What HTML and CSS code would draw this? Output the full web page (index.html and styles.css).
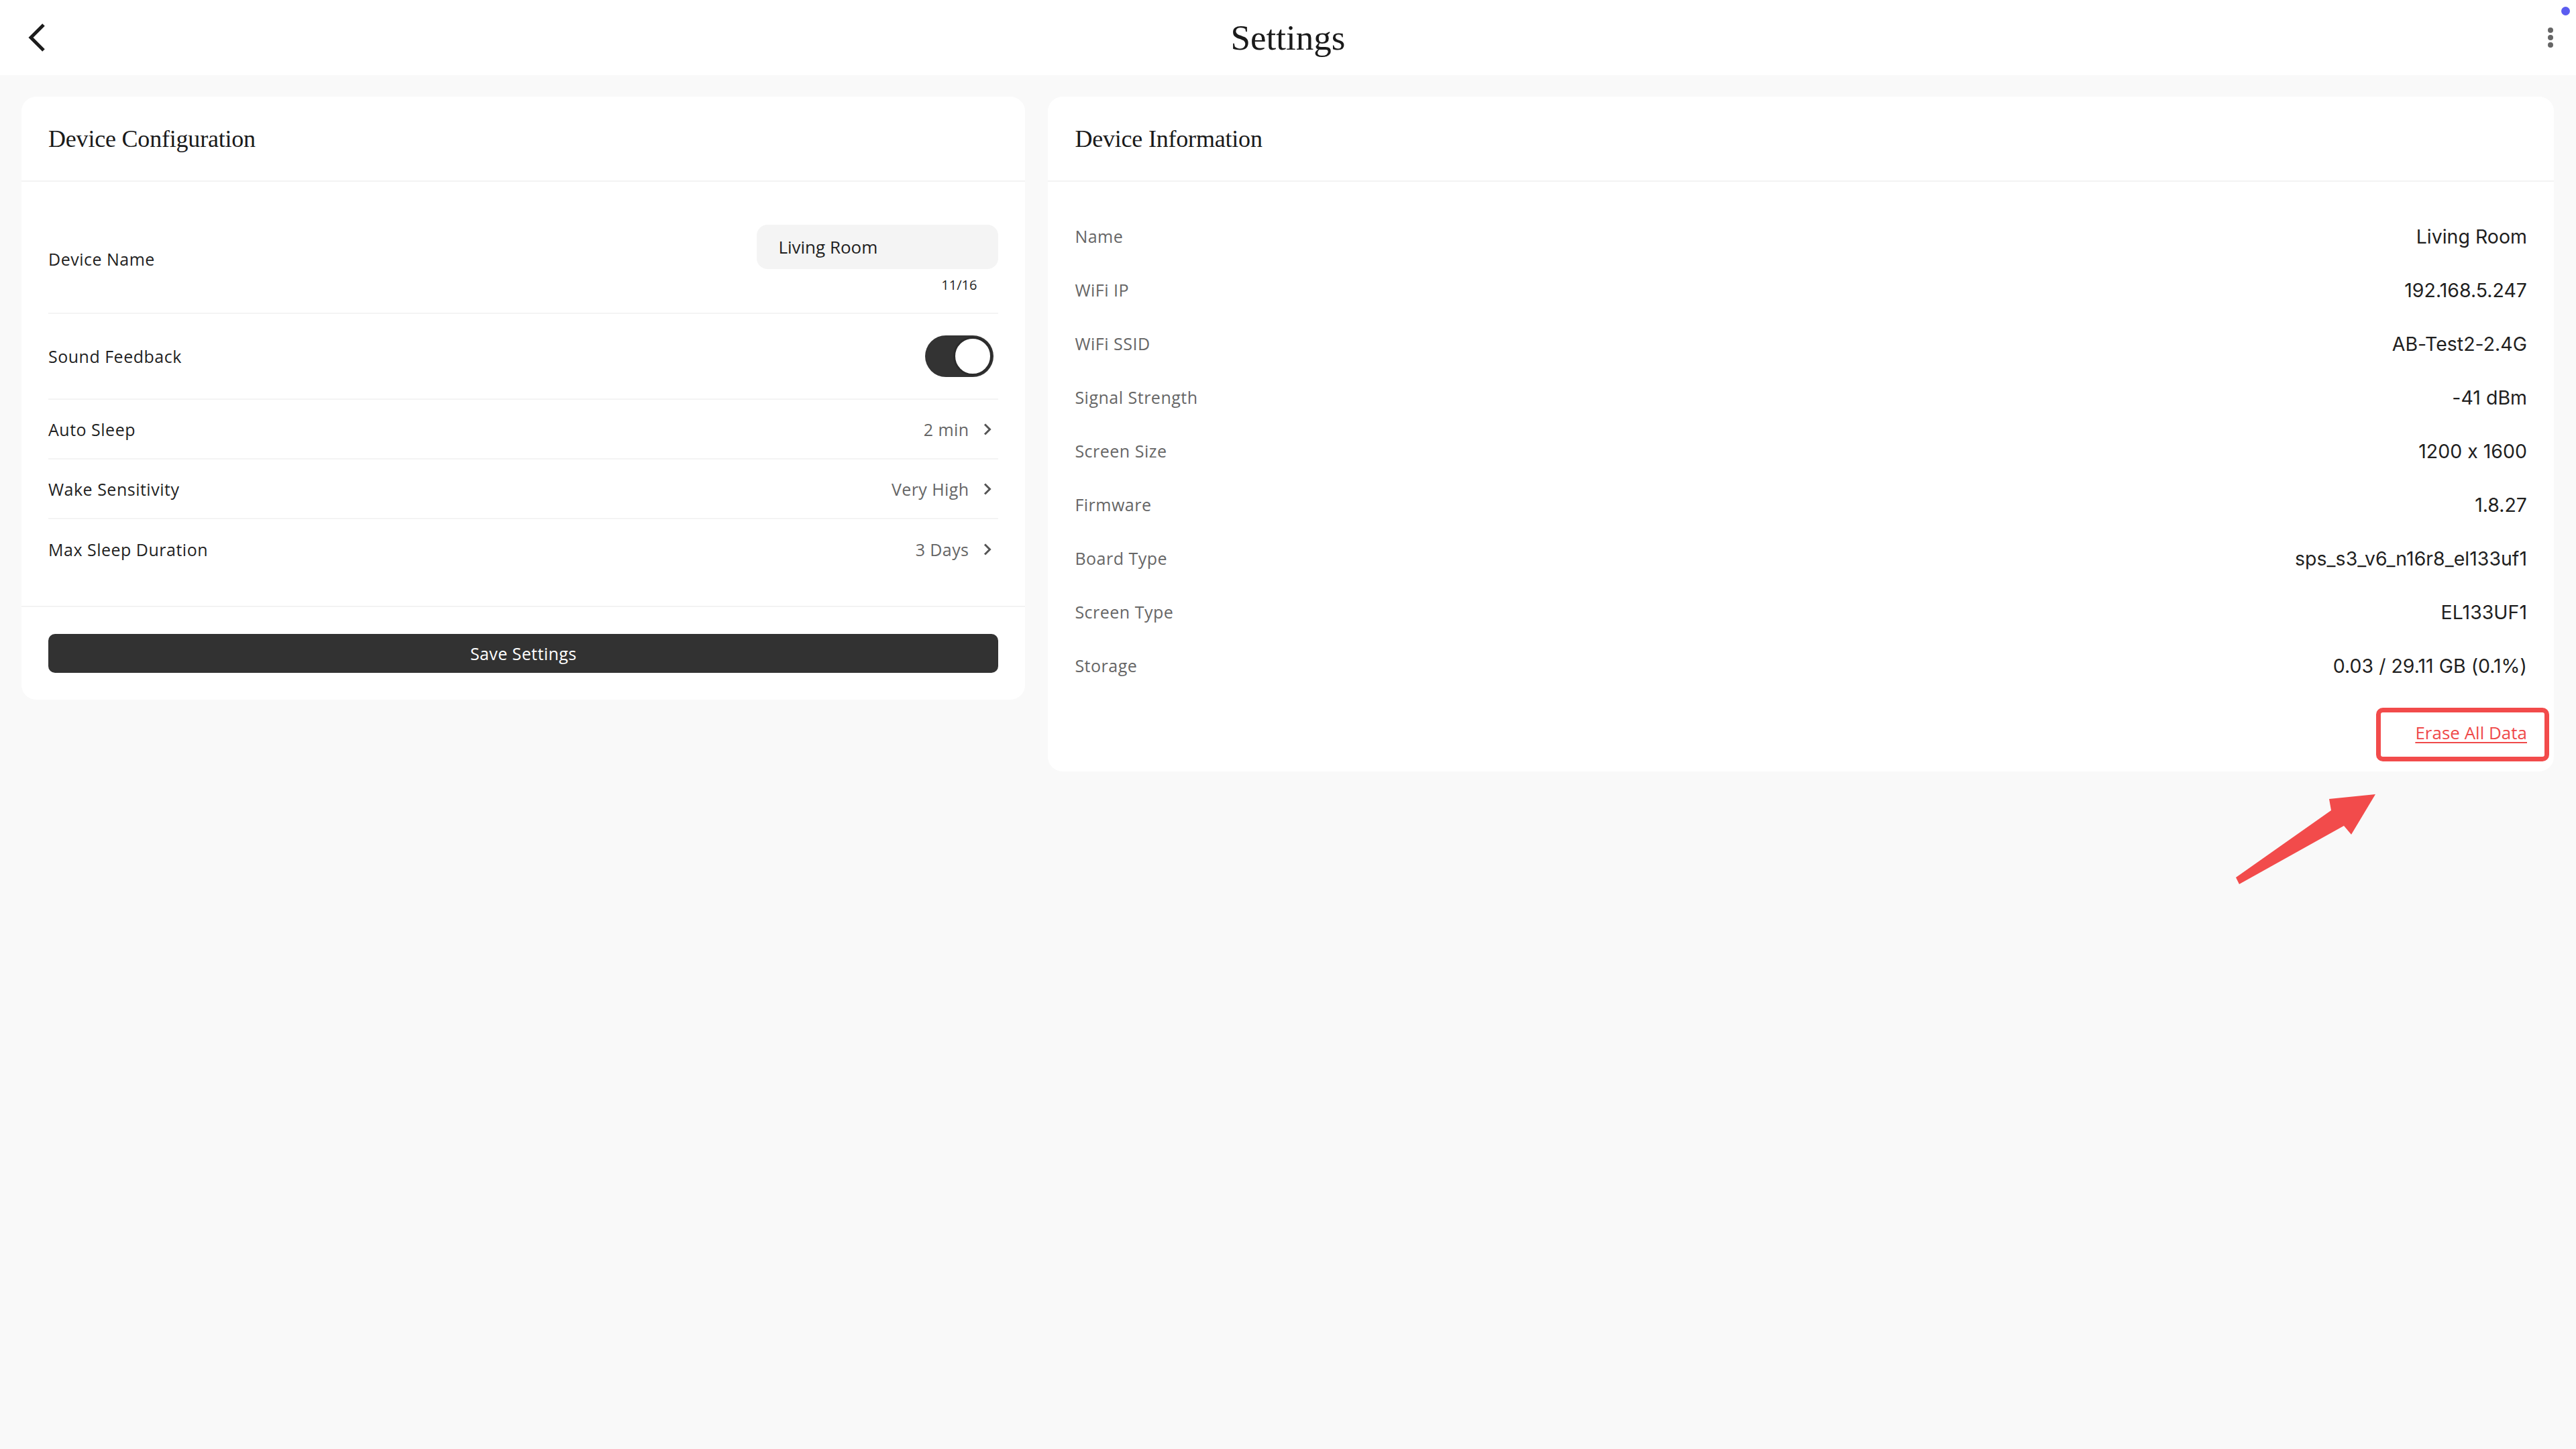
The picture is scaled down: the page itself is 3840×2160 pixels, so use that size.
FILE: index.html
```html
<!DOCTYPE html>
<html lang="en">
<head>
    <meta charset="UTF-8">
    <meta name="viewport" content="width=device-width, initial-scale=1.0">
    <title>Settings</title>
    <link rel="stylesheet" href="styles.css">
</head>
<body>
    <header class="topbar">
        <button class="icon-btn back-btn" aria-label="Back">
            <svg viewBox="0 0 28 44" width="28" height="44"><path d="M24 3 L5 22 L24 41" fill="none" stroke="#1c1c1c" stroke-width="5"/></svg>
        </button>
        <h1 class="page-title">Settings</h1>
        <button class="icon-btn menu-btn" aria-label="More options">
            <span class="dot"></span>
            <span class="dot"></span>
            <span class="dot"></span>
        </button>
        <span class="status-dot"></span>
    </header>

    <main class="content">
        <section class="card">
            <div class="card-header">
                <h2>Device Configuration</h2>
            </div>
            <div class="card-body config-body">
                <div class="setting-row name-row">
                    <label for="deviceName">Device Name</label>
                    <div class="name-field">
                        <input type="text" id="deviceName" value="Living Room" maxlength="16">
                        <span class="char-count">11/16</span>
                    </div>
                </div>
                <div class="setting-row toggle-row">
                    <span class="setting-label">Sound Feedback</span>
                    <button class="toggle is-on" aria-label="Sound Feedback"><span class="knob"></span></button>
                </div>
                <div class="setting-row link-row">
                    <span class="setting-label">Auto Sleep</span>
                    <span class="setting-value">2 min
                        <svg viewBox="0 0 24 24" width="24" height="24"><path d="M4 4.5 L11.5 12 L4 19.5" fill="none" stroke="#555" stroke-width="3"/></svg>
                    </span>
                </div>
                <div class="setting-row link-row">
                    <span class="setting-label">Wake Sensitivity</span>
                    <span class="setting-value">Very High
                        <svg viewBox="0 0 24 24" width="24" height="24"><path d="M4 4.5 L11.5 12 L4 19.5" fill="none" stroke="#555" stroke-width="3"/></svg>
                    </span>
                </div>
                <div class="setting-row link-row">
                    <span class="setting-label">Max Sleep Duration</span>
                    <span class="setting-value">3 Days
                        <svg viewBox="0 0 24 24" width="24" height="24"><path d="M4 4.5 L11.5 12 L4 19.5" fill="none" stroke="#555" stroke-width="3"/></svg>
                    </span>
                </div>
            </div>
            <div class="card-footer">
                <button class="save-btn">Save Settings</button>
            </div>
        </section>

        <section class="card">
            <div class="card-header">
                <h2>Device Information</h2>
            </div>
            <div class="card-body info-body">
                <div class="info-row"><span class="info-label">Name</span><span class="info-value">Living Room</span></div>
                <div class="info-row"><span class="info-label">WiFi IP</span><span class="info-value">192.168.5.247</span></div>
                <div class="info-row"><span class="info-label">WiFi SSID</span><span class="info-value">AB-Test2-2.4G</span></div>
                <div class="info-row"><span class="info-label">Signal Strength</span><span class="info-value">-41 dBm</span></div>
                <div class="info-row"><span class="info-label">Screen Size</span><span class="info-value">1200 x 1600</span></div>
                <div class="info-row"><span class="info-label">Firmware</span><span class="info-value">1.8.27</span></div>
                <div class="info-row"><span class="info-label">Board Type</span><span class="info-value">sps_s3_v6_n16r8_el133uf1</span></div>
                <div class="info-row"><span class="info-label">Screen Type</span><span class="info-value">EL133UF1</span></div>
                <div class="info-row"><span class="info-label">Storage</span><span class="info-value">0.03 / 29.11 GB (0.1%)</span></div>

                <div class="erase-row">
                    <a href="#" class="erase-link">Erase All Data</a>
                    <!-- annotation overlay -->
                    <span class="highlight-box"></span>
                    <svg class="callout-arrow" viewBox="0 0 225 150" width="225" height="150">
                        <polygon points="7,132 149,32 146,15 215,8 179,68 168,55 12,142" fill="#f24b4b"/>
                    </svg>
                </div>
            </div>
        </section>
    </main>
</body>
</html>
```

FILE: styles.css
```css
* {
    box-sizing: border-box;
}
body {
    margin: 0;
    min-height: 100vh;
    background-color: #f9f9f9;
    font-family: 'Open Sans', 'Noto Sans', sans-serif;
    color: #1f1f1f;
}
button {
    font-family: inherit;
}
.topbar {
    height: 112px;
    background-color: #ffffff;
    display: flex;
    align-items: center;
    justify-content: space-between;
    padding: 0 30px 0 41px;
    position: relative;
}
.icon-btn {
    background: none;
    border: none;
    padding: 0;
    cursor: pointer;
    display: flex;
}
.page-title {
    position: absolute;
    left: 50%;
    transform: translateX(-50%);
    margin: 0;
    font-family: 'Liberation Serif', serif;
    font-weight: normal;
    font-size: 53px;
    color: #1a1a1a;
}
.menu-btn {
    flex-direction: column;
    gap: 3px;
    padding: 4px;
}
.dot {
    width: 8px;
    height: 8px;
    border-radius: 50%;
    background-color: #666;
}
.status-dot {
    position: absolute;
    top: 10px;
    right: 9px;
    width: 13px;
    height: 13px;
    border-radius: 50%;
    background-color: #5b5cf0;
}
.content {
    display: grid;
    grid-template-columns: 2fr 3fr;
    gap: 34px;
    align-items: start;
    padding: 32px 33px 32px 32px;
}
.card {
    background-color: #ffffff;
    border-radius: 22px;
}
.card-header {
    height: 127px;
    display: flex;
    align-items: center;
    padding: 0 40px;
    border-bottom: 2px solid #f3f3f3;
}
.card-header h2 {
    margin: 0;
    font-family: 'Liberation Serif', serif;
    font-weight: normal;
    font-size: 36px;
    color: #1a1a1a;
    letter-spacing: -0.2px;
}
.config-body {
    padding: 31px 40px 40px;
}
.setting-row {
    display: flex;
    align-items: center;
    justify-content: space-between;
    border-bottom: 2px solid #f4f4f4;
}
.setting-row:last-child {
    border-bottom: none;
}
.setting-row label,
.setting-label {
    font-size: 25px;
    letter-spacing: 0.5px;
    color: #1f1f1f;
}
.name-row {
    padding: 33px 0 29px;
}
.name-field {
    width: 360px;
    display: flex;
    flex-direction: column;
}
.name-field input {
    height: 66px;
    border: none;
    border-radius: 16px;
    background-color: #f4f4f4;
    padding: 0 32px;
    font-family: inherit;
    font-size: 26px;
    color: #1f1f1f;
    outline: none;
}
.char-count {
    align-self: flex-end;
    margin-top: 12px;
    padding-right: 32px;
    font-size: 20px;
    line-height: 24px;
    color: #1f1f1f;
}
.toggle-row {
    padding: 32px 0;
}
.toggle {
    width: 102px;
    height: 62px;
    margin-right: 7px;
    border: none;
    border-radius: 31px;
    background-color: #333333;
    padding: 2px;
    display: flex;
    justify-content: flex-end;
}
.knob {
    width: 58px;
    height: 58px;
    border-radius: 50%;
    background-color: #ffffff;
    border: 3px solid #2b2b2b;
}
.link-row {
    height: 89px;
}
.setting-value {
    display: flex;
    align-items: center;
    gap: 20px;
    font-size: 25px;
    letter-spacing: 0.4px;
    color: #666666;
}
.card-footer {
    border-top: 2px solid #f3f3f3;
    padding: 40px;
}
.save-btn {
    width: 100%;
    height: 58px;
    border: none;
    border-radius: 10px;
    background-color: #323232;
    color: #ffffff;
    font-size: 25px;
    letter-spacing: 0.4px;
    cursor: pointer;
}
.info-body {
    padding: 41px 40px 38px;
}
.info-row {
    height: 80px;
    display: flex;
    align-items: center;
    justify-content: space-between;
}
.info-label {
    font-size: 25px;
    letter-spacing: 0.5px;
    color: #666666;
}
.info-value {
    font-family: 'Inter', 'Roboto', sans-serif;
    font-feature-settings: "calt" 0;
    font-size: 28.5px;
    color: #1f1f1f;
}
.erase-row {
    position: relative;
    height: 40px;
    margin-top: 40px;
    display: flex;
    align-items: center;
    justify-content: flex-end;
}
.erase-link {
    font-size: 26px;
    color: #ef4a4a;
    text-decoration: underline;
    text-underline-offset: 4px;
}
.highlight-box {
    position: absolute;
    top: -17px;
    right: -33px;
    width: 258px;
    height: 80px;
    border: 7px solid #f24b4b;
    border-radius: 10px;
}
.callout-arrow {
    position: absolute;
    top: 104px;
    right: 216px;
}
```
